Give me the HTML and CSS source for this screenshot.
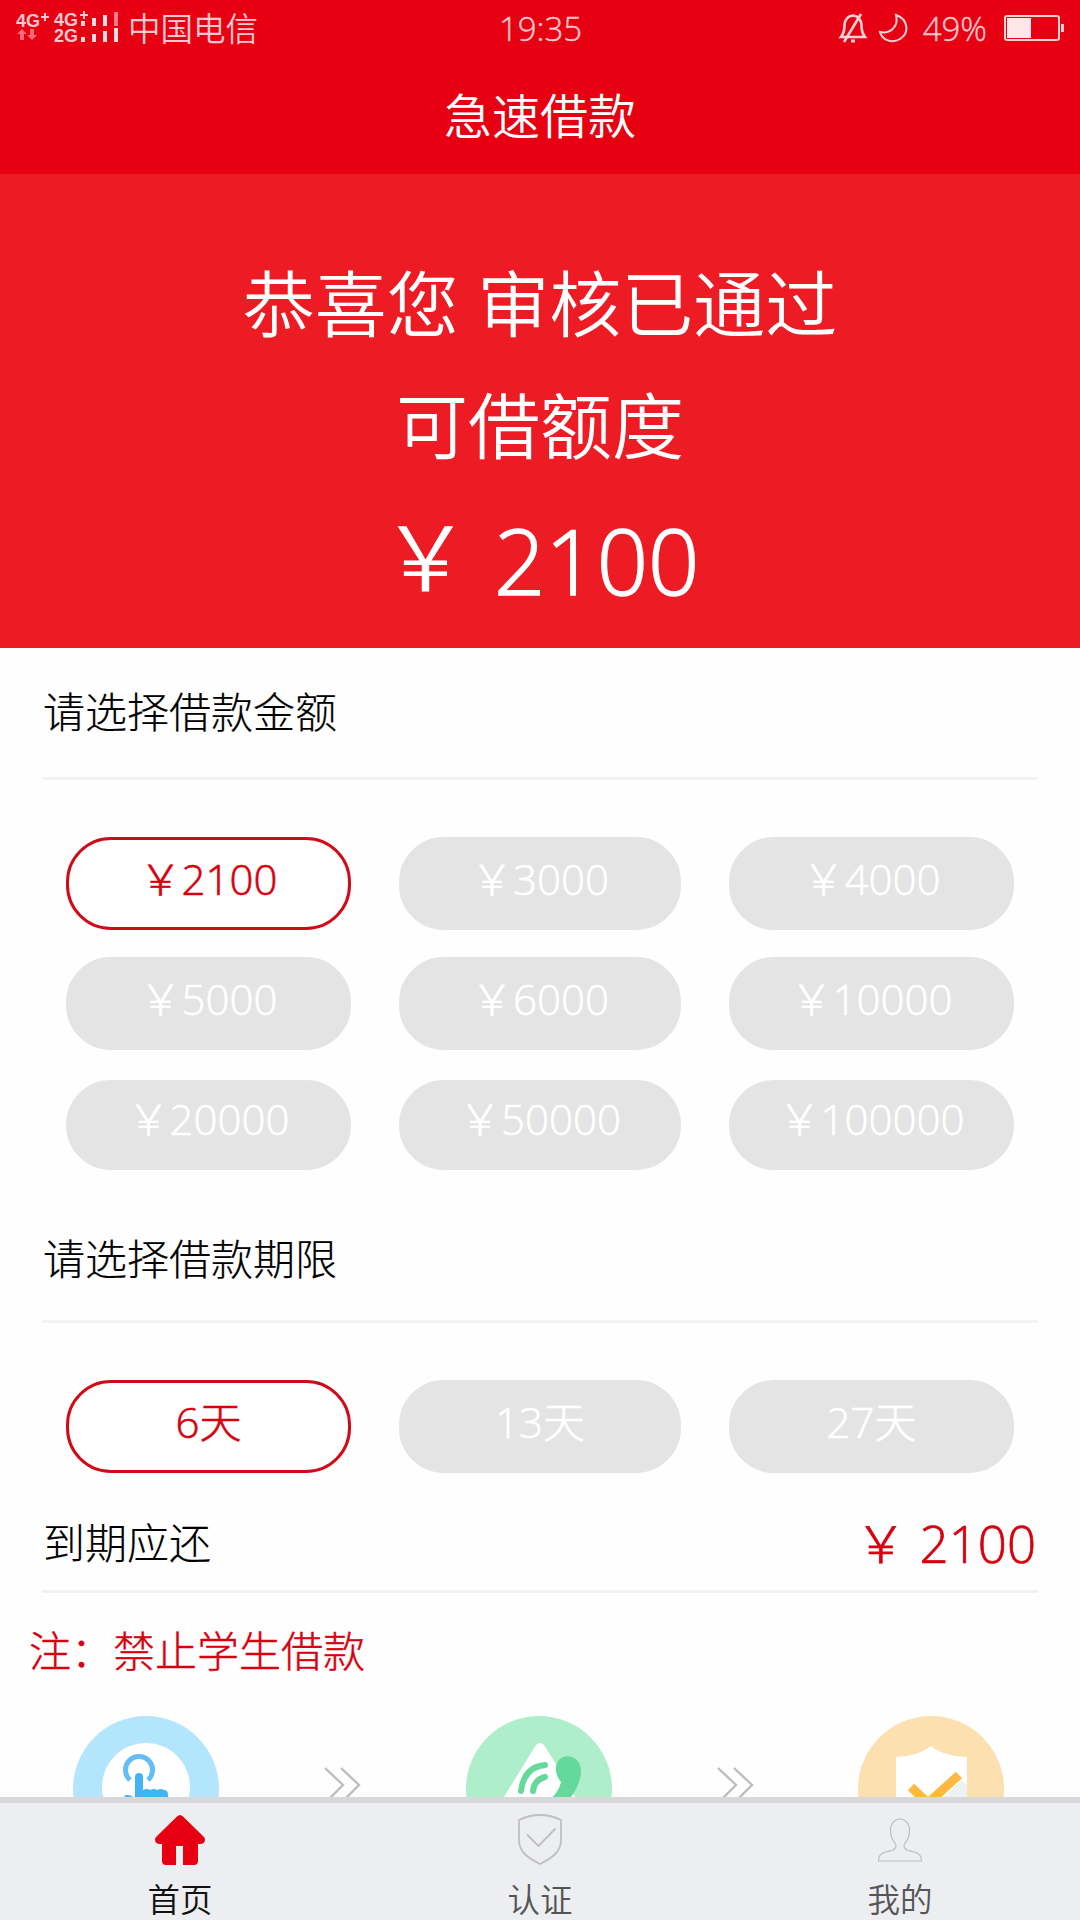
FILE: index.html
```html
<!DOCTYPE html>
<html lang="zh-CN">
<head>
    <meta charset="UTF-8">
    <meta name="viewport" content="width=device-width, initial-scale=1.0">
    <title>急速借款</title>
    <link rel="stylesheet" href="styles.css">
</head>
<body>
    <header class="header">
        <div class="status-bar">
            <div class="status-left">
                <svg class="signal" width="108" height="42" viewBox="0 -4 108 42">
                    <g class="signal-text">
                        <text x="0" y="17">4G</text>
                        <text x="38" y="16">4G</text>
                        <text x="38" y="32">2G</text>
                    </g>
                    <path d="M25 7h8M29 3v8M64 5h8M68 1v8" stroke="#ffc8cf" stroke-width="2"/>
                    <path d="M6 19l5 5H8v6H4v-6H1zM16 30l-5-5h3v-6h4v6h3z" fill="#ff6b7a"/>
                    <g fill="#ffdce0">
                        <rect x="65" y="11" width="4" height="5"/>
                        <rect x="76" y="8" width="4" height="8"/>
                        <rect x="87" y="5" width="4" height="11"/>
                        <rect x="65" y="27" width="4" height="5"/>
                        <rect x="76" y="24" width="4" height="8"/>
                        <rect x="87" y="21" width="4" height="11"/>
                        <rect x="98" y="18" width="4" height="14"/>
                    </g>
                    <rect x="98" y="2" width="4" height="14" fill="#ff7b88"/>
                </svg>
                <span class="carrier">中国电信</span>
            </div>
            <div class="status-time">19:35</div>
            <div class="status-right">
                <svg width="30" height="30" viewBox="0 0 28 30" fill="none" stroke="#ffd0d6" stroke-width="2.600">
                    <path d="M2 24C6 19 5 17 5.500 12C6 6 9 3 14 2.500C19 3 22 6 22.500 12C23 17 22 19 26 24Z"/>
                    <path d="M22 1L5 29"/>
                    <path d="M12 28h4" stroke-width="3"/>
                </svg>
                <svg class="moon" width="30" height="30" viewBox="0 0 30 30" fill="none" stroke="#ffd0d6" stroke-width="2">
                    <path d="M18 2C30 6 32 20 22 26C14 31 4 27 2 19C12 21 21 14 18 2Z"/>
                </svg>
                <span class="percent">49%</span>
                <svg class="battery" width="61" height="26" viewBox="0 0 61 26">
                    <rect x="1" y="1" width="54" height="24" rx="2" fill="none" stroke="#ffd0d6" stroke-width="2"/>
                    <rect x="3" y="3" width="24" height="20" fill="#ffe6e8"/>
                    <rect x="57" y="9" width="3" height="8" fill="#ffd0d6"/>
                </svg>
            </div>
        </div>
        <h1 class="title">急速借款</h1>
    </header>

    <section class="hero">
        <p>恭喜您 审核已通过</p>
        <p>可借额度</p>
        <p class="quota">￥ <span class="quota-value">2100</span></p>
    </section>

    <main class="content">
        <h2 class="label">请选择借款金额</h2>
        <div class="options">
            <button class="pill selected">￥2100</button>
            <button class="pill">￥3000</button>
            <button class="pill">￥4000</button>
            <button class="pill">￥5000</button>
            <button class="pill">￥6000</button>
            <button class="pill">￥10000</button>
            <button class="pill short">￥20000</button>
            <button class="pill short">￥50000</button>
            <button class="pill short">￥100000</button>
        </div>

        <h2 class="label label-term">请选择借款期限</h2>
        <div class="options options-term">
            <button class="pill selected">6天</button>
            <button class="pill">13天</button>
            <button class="pill">27天</button>
        </div>

        <div class="repay">
            <span>到期应还</span>
            <span class="repay-amount">￥ 2100</span>
        </div>
        <p class="note">注：禁止学生借款</p>

        <div class="steps">
            <svg width="146" height="146" viewBox="0 0 146 146">
                <circle cx="73" cy="73" r="73" fill="#b3e5fc"/>
                <circle cx="73" cy="71" r="44" fill="#fff"/>
                <path d="M57 64A13.500 13.500 0 1 1 75 64" fill="none" stroke="#64bdf5" stroke-width="5"/>
                <path d="M62 100V61q0-4 4-4t4 4v13q4-2 7 0q4-2 7 0q4-2 7 0q4 0 4 5v21zM51 80q5-3 12 3v9z" fill="#42b4f5"/>
            </svg>
            <svg class="arrows" width="38" height="42" viewBox="0 0 38 42" fill="none" stroke="#bdbdbd" stroke-width="2.400">
                <path d="M2 3L20 20L2 38M18 3L36 20L18 38"/>
            </svg>
            <svg width="146" height="146" viewBox="0 0 146 146">
                <circle cx="73" cy="73" r="73" fill="#aeeecb"/>
                <path d="M70 29q4-4 8 0l13 21l6 20l12 10l8 20H20l18-19z" fill="#fff"/>
                <path d="M55 75Q58 51 79 49M67 75Q68 64 79 61" fill="none" stroke="#64d99b" stroke-width="6" stroke-linecap="round"/>
                <path d="M92 45C98 37 113 39 115 53C116 67 106 82 94 93L78 88C88 81 93 75 95 66C90 60 88 52 92 45Z" fill="#64d99b"/>
            </svg>
            <svg class="arrows" width="38" height="42" viewBox="0 0 38 42" fill="none" stroke="#bdbdbd" stroke-width="2.400">
                <path d="M2 3L20 20L2 38M18 3L36 20L18 38"/>
            </svg>
            <svg width="146" height="146" viewBox="0 0 146 146">
                <circle cx="73" cy="73" r="73" fill="#fde0b0"/>
                <path d="M38 41Q61 40 73 30Q85 40 109 41V95L73 125L38 95Z" fill="#fff"/>
                <path d="M74 92L104 64L109 70V95z" fill="#edf2f2"/>
                <path d="M53 71L70 87L101 59" fill="none" stroke="#ffb840" stroke-width="9"/>
            </svg>
        </div>
    </main>

    <nav class="tabbar">
        <a class="tab active">
            <svg width="52" height="52" viewBox="0 0 52 52" fill="#e60012">
                <path d="M23 2.500Q26-.5 29 2.500L50 23Q52 26 50 28.500Q49 30 44 30V47Q44 51 40 51H29V32H22V51H12Q8 51 8 47V30Q3 30 2 28.500Q0 26 2 23Z"/>
            </svg>
            <span>首页</span>
        </a>
        <a class="tab">
            <svg width="52" height="52" viewBox="0 0 52 52" fill="none" stroke="#bfbfc1" stroke-width="1.800" stroke-linejoin="round" stroke-linecap="round">
                <path d="M5 6Q26-4 47 6V26C47 38 38 44 26 50C14 44 5 38 5 26Z"/>
                <path d="M13.500 21L24.500 32L41 15"/>
            </svg>
            <span>认证</span>
        </a>
        <a class="tab">
            <svg width="52" height="52" viewBox="0 0 52 52" fill="none" stroke="#bfbfc1" stroke-width="1.200">
                <path d="M26 5C31 5 35.500 9 35.500 16C35.500 22 34 26 31 29C29 32 30 35 34 36.500C40 38 47.500 38 47.500 47H4.500C4.500 38 12 38 18 36.500C22 35 23 32 21 29C18 26 16.500 22 16.500 16C16.500 9 21 5 26 5Z"/>
            </svg>
            <span>我的</span>
        </a>
    </nav>
</body>
</html>
```

FILE: styles.css
```css
* { box-sizing: border-box; margin: 0; padding: 0; }
body {
    display: flex;
    flex-direction: column;
    height: 1920px;
    overflow: hidden;
    background-color: #fefefe;
    color: #000;
    font-family: "Open Sans", "Noto Sans CJK SC", sans-serif;
    font-weight: 350;
}
svg { display: block; flex-shrink: 0; }

/* Header */
.header { height: 174px; flex-shrink: 0; background-color: #e60012; color: #fff; }
.status-bar {
    display: grid;
    grid-template-columns: 1fr auto 1fr;
    align-items: center;
    height: 58px;
    padding: 0 15px 0 16px;
    color: #ffc8cf;
    font-size: 33px;
    line-height: 58px;
}
.status-left { display: flex; align-items: center; }
.signal { margin-top: -4px; }
.signal-text { font: bold 18px "Liberation Sans", sans-serif; fill: #ffc8cf; }
.carrier { margin-left: 4px; font-size: 32.5px; }
.status-time, .percent { -webkit-text-stroke: 0.4px; }
.status-right { display: flex; align-items: center; justify-content: flex-end; }
.status-right svg { margin-top: -3px; }
.status-right .moon { margin: -3px 15px 0 10px; }
.percent { margin-right: 17px; }
.title { padding-top: 22px; font-size: 48px; font-weight: 350; line-height: 72px; text-align: center; }

/* Approved quota */
.hero {
    height: 474px;
    flex-shrink: 0;
    padding-top: 68px;
    background-color: #ed1c24;
    color: #fff;
    font-size: 72px;
    line-height: 122px;
    text-align: center;
}
.hero .quota { padding-top: 9px; font-size: 90px; }
.quota-value { line-height: 1; vertical-align: -4px; -webkit-text-stroke: 1.6px; }

/* Form */
.content { height: 1149px; flex-shrink: 0; overflow: hidden; }
.label {
    height: 132px;
    margin: 0 42px;
    padding-left: 1px;
    border-bottom: 3px solid #f2f2f2;
    font-size: 42px;
    font-weight: 300;
    line-height: 127px;
    -webkit-text-stroke: 0.2px;
}
.label-term { height: 123px; margin-top: 30px; line-height: 118px; }
.options {
    display: grid;
    grid-template-columns: 285px 282px 285px;
    grid-auto-rows: 93px;
    column-gap: 48px;
    row-gap: 27px;
    padding: 57px 66px 0;
}
.pill {
    height: 93px;
    padding-bottom: 9px;
    border: 3px solid #e4e4e4;
    border-radius: 45px;
    background-color: #e4e4e4;
    color: #fff;
    font: inherit;
    font-size: 42px;
    font-weight: 300;
    line-height: 60px;
    -webkit-text-stroke: 0.6px;
}
.pill.short { height: 90px; margin-top: 3px; padding-bottom: 12px; }
.pill.selected { border-color: #d00a17; background-color: #fff; color: #d7000f; }
.repay {
    display: flex;
    justify-content: space-between;
    height: 120px;
    margin: 0 42px;
    padding: 0 2px 0 1px;
    border-bottom: 3px solid #f2f2f2;
    font-size: 42px;
    font-weight: 300;
    line-height: 140px;
    -webkit-text-stroke: 0.2px;
}
.repay-amount { color: #d7000f; font-size: 51px; -webkit-text-stroke: 0.7px; }
.note {
    height: 123px;
    padding-left: 29px;
    color: #d7000f;
    font-size: 42px;
    font-weight: 300;
    line-height: 116px;
    -webkit-text-stroke: 0.4px;
}
.steps { display: flex; justify-content: space-between; padding: 0 76px 0 73px; }
.arrows { margin-top: 49px; }

/* Bottom tabs */
.tabbar {
    display: flex;
    height: 123px;
    flex-shrink: 0;
    border-top: 6px solid #d8d8d8;
    background-color: #edeef2;
}
.tab {
    display: flex;
    flex: 1;
    flex-direction: column;
    align-items: center;
    padding-top: 11px;
    color: #555;
    font-size: 32.5px;
    line-height: 48px;
}
.tab span { margin-top: 10px; }
.tab.active { color: #111; }
```
